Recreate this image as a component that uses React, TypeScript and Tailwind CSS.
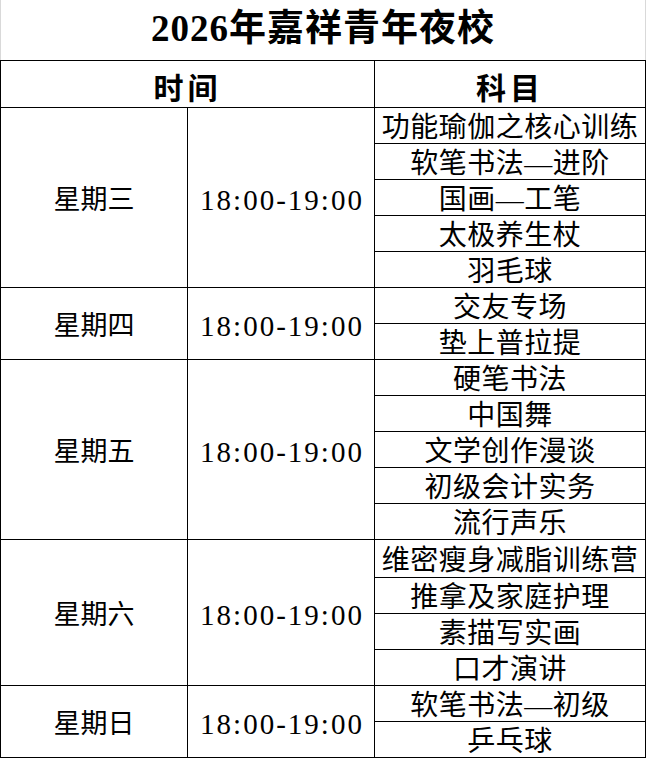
import React from "react";

type Group = {
  day: string;
  time: string;
  subjects: string[];
  tall?: number; // index of a row that is a little taller in the sheet
};

const groups: Group[] = [
  {
    day: "星期三",
    time: "18:00-19:00",
    subjects: ["功能瑜伽之核心训练", "软笔书法—进阶", "国画—工笔", "太极养生杖", "羽毛球"],
  },
  { day: "星期四", time: "18:00-19:00", subjects: ["交友专场", "垫上普拉提"] },
  {
    day: "星期五",
    time: "18:00-19:00",
    subjects: ["硬笔书法", "中国舞", "文学创作漫谈", "初级会计实务", "流行声乐"],
  },
  {
    day: "星期六",
    time: "18:00-19:00",
    subjects: ["维密瘦身减脂训练营", "推拿及家庭护理", "素描写实画", "口才演讲"],
    tall: 0,
  },
  { day: "星期日", time: "18:00-19:00", subjects: ["软笔书法—初级", "乒乓球"] },
];

const font = "font-['Liberation_Serif','Noto_Sans_CJK_SC',serif]";

export default function App() {
  return (
    <div className={`w-[646px] h-[758px] bg-white text-black ${font}`}>
      {/* Title */}
      <div className="h-[60px] border-x border-[#d9d9d9] flex items-center justify-center pb-1">
        <h1 className="text-[37px] leading-none font-bold tracking-[1px]">2026年嘉祥青年夜校</h1>
      </div>

      {/* Table */}
      <div className="border border-black border-b-0">
        <div className="flex h-[47px] border-b border-black">
          <div className="w-[374px] border-r border-black flex items-center justify-center pt-[9px]">
            <span className="text-[30px] leading-none font-semibold tracking-[4px]">时间</span>
          </div>
          <div className="flex-1 flex items-center justify-center pt-[9px]">
            <span className="text-[30px] leading-none font-semibold tracking-[4px]">科目</span>
          </div>
        </div>

        {groups.map((g) => (
          <div key={g.day} className="flex border-b border-black">
            <div className="w-[187px] border-r border-black flex items-center justify-center pt-[6px]">
              <span className="text-[27px] leading-none">{g.day}</span>
            </div>
            <div className="w-[187px] border-r border-black flex items-center justify-center pt-[5px]">
              <span className="text-[29px] leading-none tracking-[2px] pl-[2px]">{g.time}</span>
            </div>
            <div className="flex-1 flex flex-col">
              {g.subjects.map((s, i) => (
                <div
                  key={s}
                  className={`flex items-center justify-center pt-[5px] ${
                    i > 0 ? "border-t border-black h-[36px]" : g.tall === i ? "h-[37px]" : "h-[35px]"
                  }`}
                >
                  <span className="text-[28px] leading-none tracking-[0.5px] whitespace-nowrap">{s}</span>
                </div>
              ))}
            </div>
          </div>
        ))}
      </div>
    </div>
  );
}
